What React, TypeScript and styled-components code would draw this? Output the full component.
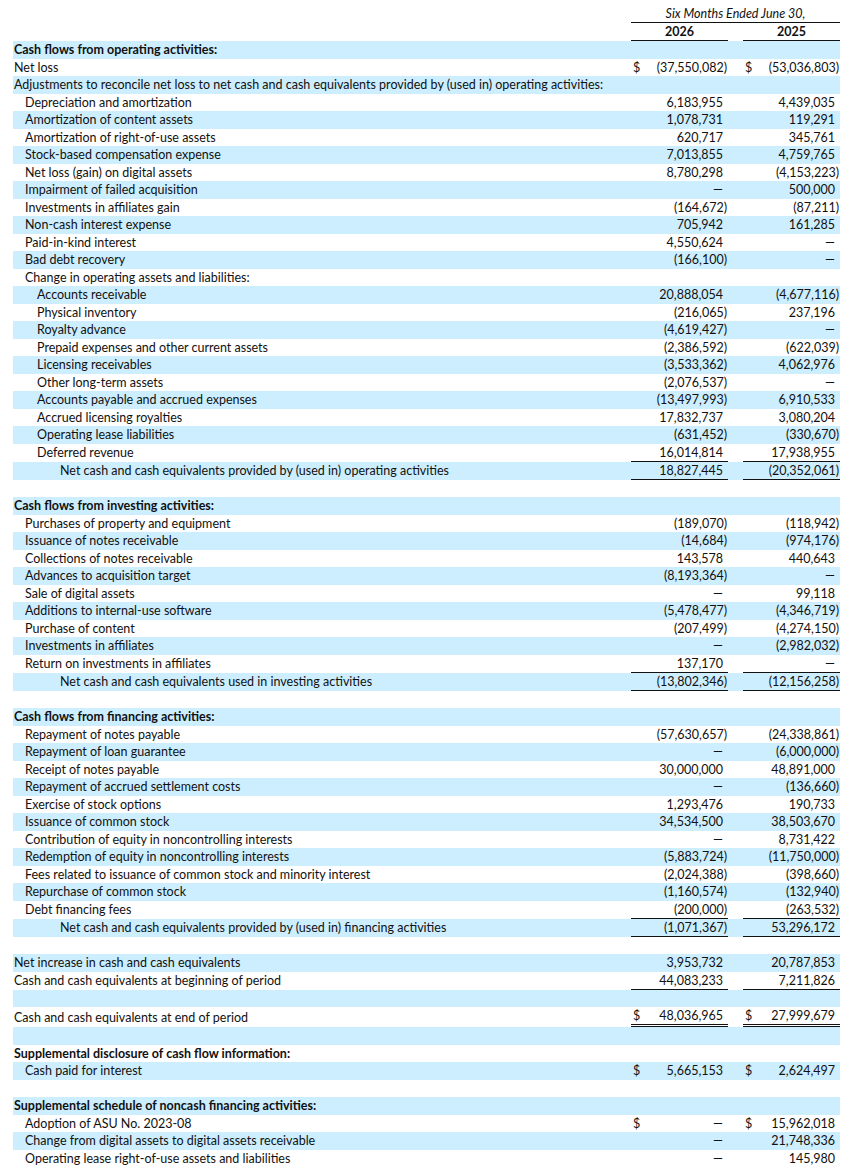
import React from "react";
import styled, { createGlobalStyle } from "styled-components";

const GlobalStyle = createGlobalStyle`
  html, body { margin: 0; padding: 0; background: #ffffff; }
  body { font-family: Lato, "Noto Sans", "Liberation Sans", sans-serif; color: #111111; }
`;

type Val = { v: string; d?: boolean };
type Line = "single" | "double";
type Row = {
  label?: string;
  level?: 0 | 1 | 2 | 3;
  bold?: boolean;
  a?: Val;
  b?: Val;
  line?: Line;
};

const n = (v: string, d?: boolean): Val => ({ v, d });
const D = "\u2014";

const rows: Row[] = [
  { label: "Cash flows from operating activities:", bold: true },
  { label: "Net loss", a: n("(37,550,082)", true), b: n("(53,036,803)", true) },
  { label: "Adjustments to reconcile net loss to net cash and cash equivalents provided by (used in) operating activities:" },
  { label: "Depreciation and amortization", level: 1, a: n("6,183,955"), b: n("4,439,035") },
  { label: "Amortization of content assets", level: 1, a: n("1,078,731"), b: n("119,291") },
  { label: "Amortization of right-of-use assets", level: 1, a: n("620,717"), b: n("345,761") },
  { label: "Stock-based compensation expense", level: 1, a: n("7,013,855"), b: n("4,759,765") },
  { label: "Net loss (gain) on digital assets", level: 1, a: n("8,780,298"), b: n("(4,153,223)") },
  { label: "Impairment of failed acquisition", level: 1, a: n(D), b: n("500,000") },
  { label: "Investments in affiliates gain", level: 1, a: n("(164,672)"), b: n("(87,211)") },
  { label: "Non-cash interest expense", level: 1, a: n("705,942"), b: n("161,285") },
  { label: "Paid-in-kind interest", level: 1, a: n("4,550,624"), b: n(D) },
  { label: "Bad debt recovery", level: 1, a: n("(166,100)"), b: n(D) },
  { label: "Change in operating assets and liabilities:", level: 1 },
  { label: "Accounts receivable", level: 2, a: n("20,888,054"), b: n("(4,677,116)") },
  { label: "Physical inventory", level: 2, a: n("(216,065)"), b: n("237,196") },
  { label: "Royalty advance", level: 2, a: n("(4,619,427)"), b: n(D) },
  { label: "Prepaid expenses and other current assets", level: 2, a: n("(2,386,592)"), b: n("(622,039)") },
  { label: "Licensing receivables", level: 2, a: n("(3,533,362)"), b: n("4,062,976") },
  { label: "Other long-term assets", level: 2, a: n("(2,076,537)"), b: n(D) },
  { label: "Accounts payable and accrued expenses", level: 2, a: n("(13,497,993)"), b: n("6,910,533") },
  { label: "Accrued licensing royalties", level: 2, a: n("17,832,737"), b: n("3,080,204") },
  { label: "Operating lease liabilities", level: 2, a: n("(631,452)"), b: n("(330,670)") },
  { label: "Deferred revenue", level: 2, a: n("16,014,814"), b: n("17,938,955"), line: "single" },
  { label: "Net cash and cash equivalents provided by (used in) operating activities", level: 3, a: n("18,827,445"), b: n("(20,352,061)"), line: "single" },
  {},
  { label: "Cash flows from investing activities:", bold: true },
  { label: "Purchases of property and equipment", level: 1, a: n("(189,070)"), b: n("(118,942)") },
  { label: "Issuance of notes receivable", level: 1, a: n("(14,684)"), b: n("(974,176)") },
  { label: "Collections of notes receivable", level: 1, a: n("143,578"), b: n("440,643") },
  { label: "Advances to acquisition target", level: 1, a: n("(8,193,364)"), b: n(D) },
  { label: "Sale of digital assets", level: 1, a: n(D), b: n("99,118") },
  { label: "Additions to internal-use software", level: 1, a: n("(5,478,477)"), b: n("(4,346,719)") },
  { label: "Purchase of content", level: 1, a: n("(207,499)"), b: n("(4,274,150)") },
  { label: "Investments in affiliates", level: 1, a: n(D), b: n("(2,982,032)") },
  { label: "Return on investments in affiliates", level: 1, a: n("137,170"), b: n(D), line: "single" },
  { label: "Net cash and cash equivalents used in investing activities", level: 3, a: n("(13,802,346)"), b: n("(12,156,258)"), line: "single" },
  {},
  { label: "Cash flows from financing activities:", bold: true },
  { label: "Repayment of notes payable", level: 1, a: n("(57,630,657)"), b: n("(24,338,861)") },
  { label: "Repayment of loan guarantee", level: 1, a: n(D), b: n("(6,000,000)") },
  { label: "Receipt of notes payable", level: 1, a: n("30,000,000"), b: n("48,891,000") },
  { label: "Repayment of accrued settlement costs", level: 1, a: n(D), b: n("(136,660)") },
  { label: "Exercise of stock options", level: 1, a: n("1,293,476"), b: n("190,733") },
  { label: "Issuance of common stock", level: 1, a: n("34,534,500"), b: n("38,503,670") },
  { label: "Contribution of equity in noncontrolling interests", level: 1, a: n(D), b: n("8,731,422") },
  { label: "Redemption of equity in noncontrolling interests", level: 1, a: n("(5,883,724)"), b: n("(11,750,000)") },
  { label: "Fees related to issuance of common stock and minority interest", level: 1, a: n("(2,024,388)"), b: n("(398,660)") },
  { label: "Repurchase of common stock", level: 1, a: n("(1,160,574)"), b: n("(132,940)") },
  { label: "Debt financing fees", level: 1, a: n("(200,000)"), b: n("(263,532)"), line: "single" },
  { label: "Net cash and cash equivalents provided by (used in) financing activities", level: 3, a: n("(1,071,367)"), b: n("53,296,172"), line: "single" },
  {},
  { label: "Net increase in cash and cash equivalents", a: n("3,953,732"), b: n("20,787,853") },
  { label: "Cash and cash equivalents at beginning of period", a: n("44,083,233"), b: n("7,211,826"), line: "single" },
  {},
  { label: "Cash and cash equivalents at end of period", a: n("48,036,965", true), b: n("27,999,679", true), line: "double" },
  {},
  { label: "Supplemental disclosure of cash flow information:", bold: true },
  { label: "Cash paid for interest", level: 1, a: n("5,665,153", true), b: n("2,624,497", true) },
  {},
  { label: "Supplemental schedule of noncash financing activities:", bold: true },
  { label: "Adoption of ASU No. 2023-08", level: 1, a: n(D, true), b: n("15,962,018", true) },
  { label: "Change from digital assets to digital assets receivable", level: 1, a: n(D), b: n("21,748,336") },
  { label: "Operating lease right-of-use assets and liabilities", level: 1, a: n(D), b: n("145,980") },
];

const Page = styled.div`
  padding: 5px 13px 0 13px;
  width: 827px;
`;

const Table = styled.table`
  width: 827px;
  border-collapse: separate;
  border-spacing: 0;
  table-layout: fixed;
  font-size: 12.5px;
`;

const HeadCell = styled.th<{ $italic?: boolean }>`
  height: 17px;
  padding: 0;
  line-height: 17px;
  font-weight: ${(p) => (p.$italic ? 400 : 700)};
  font-style: ${(p) => (p.$italic ? "italic" : "normal")};
  text-align: center;
  border-bottom: 1px solid #111;
  white-space: nowrap;
`;

const EmptyHead = styled.th`
  padding: 0;
`;

const BodyRow = styled.tr`
  &:nth-child(odd) {
    background: #cceeff;
  }
`;

const indents = [1, 12, 24, 47];

const LabelCell = styled.td<{ $level: number; $bold?: boolean }>`
  height: 17.5px;
  padding: 0 0 0 ${(p) => indents[p.$level]}px;
  line-height: 17px;
  font-weight: ${(p) => (p.$bold ? 700 : 400)};
  white-space: nowrap;
  overflow: visible;
`;

const ValueCell = styled.td<{ $line?: Line }>`
  padding: 0;
  line-height: 17px;
  border-bottom: ${(p) =>
    p.$line === "double" ? "3px double #111" : p.$line === "single" ? "1px solid #111" : "0"};
`;

const ValueInner = styled.div`
  display: flex;
  justify-content: space-between;
  align-items: baseline;
  padding: 0 1px 0 2px;
`;

const Dollar = styled.span`
  flex: none;
`;

const Amount = styled.span<{ $paren: boolean }>`
  margin-left: auto;
  padding-right: ${(p) => (p.$paren ? "0" : "4px")};
  white-space: nowrap;
`;

const GapCell = styled.td`
  padding: 0;
`;

function Value({ val, line }: { val?: Val; line?: Line }) {
  return (
    <ValueCell $line={line}>
      {val && (
        <ValueInner>
          {val.d && <Dollar>$</Dollar>}
          <Amount $paren={val.v.endsWith(")")}>{val.v}</Amount>
        </ValueInner>
      )}
    </ValueCell>
  );
}

export default function App() {
  return (
    <>
      <GlobalStyle />
      <Page>
        <Table>
          <colgroup>
            <col style={{ width: 618 }} />
            <col style={{ width: 97 }} />
            <col style={{ width: 15 }} />
            <col style={{ width: 97 }} />
          </colgroup>
          <thead>
            <tr>
              <EmptyHead />
              <HeadCell colSpan={3} $italic>
                Six Months Ended June 30,
              </HeadCell>
            </tr>
            <tr>
              <EmptyHead />
              <HeadCell>2026</HeadCell>
              <EmptyHead />
              <HeadCell>2025</HeadCell>
            </tr>
          </thead>
          <tbody>
            {rows.map((r, i) => (
              <BodyRow key={i}>
                <LabelCell $level={r.level ?? 0} $bold={r.bold}>
                  {r.label ?? ""}
                </LabelCell>
                <Value val={r.a} line={r.line} />
                <GapCell />
                <Value val={r.b} line={r.line} />
              </BodyRow>
            ))}
          </tbody>
        </Table>
      </Page>
    </>
  );
}
